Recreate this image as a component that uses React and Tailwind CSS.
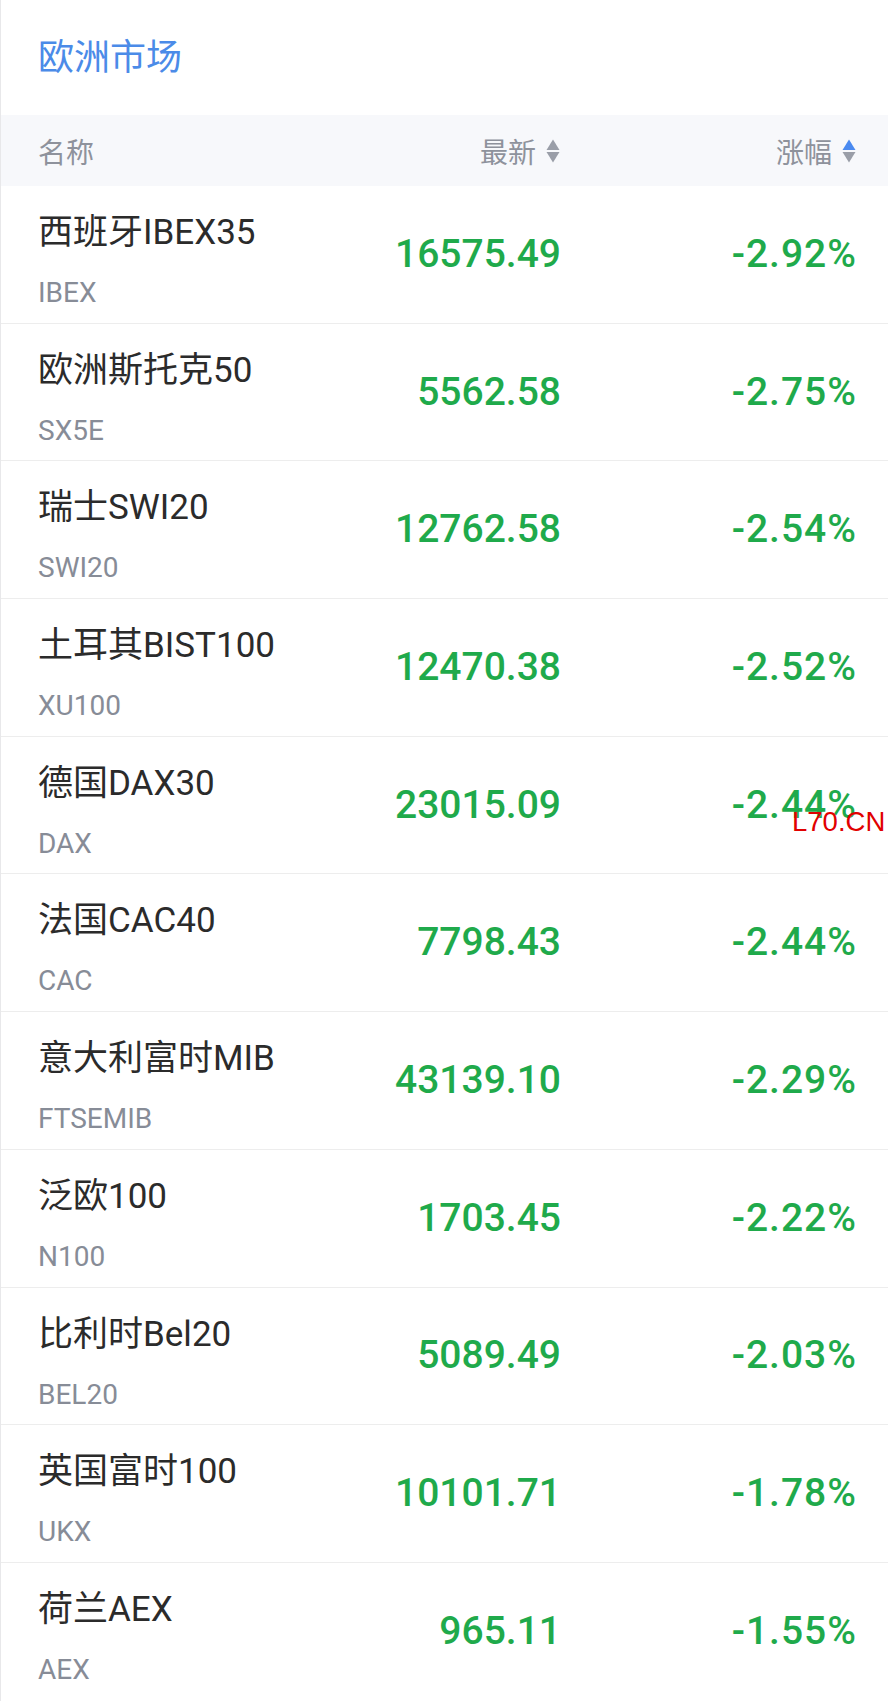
import React from "react";

const rows = [
  { name: "西班牙IBEX35", code: "IBEX", price: "16575.49", pct: "-2.92%" },
  { name: "欧洲斯托克50", code: "SX5E", price: "5562.58", pct: "-2.75%" },
  { name: "瑞士SWI20", code: "SWI20", price: "12762.58", pct: "-2.54%" },
  { name: "土耳其BIST100", code: "XU100", price: "12470.38", pct: "-2.52%" },
  { name: "德国DAX30", code: "DAX", price: "23015.09", pct: "-2.44%" },
  { name: "法国CAC40", code: "CAC", price: "7798.43", pct: "-2.44%" },
  { name: "意大利富时MIB", code: "FTSEMIB", price: "43139.10", pct: "-2.29%" },
  { name: "泛欧100", code: "N100", price: "1703.45", pct: "-2.22%" },
  { name: "比利时Bel20", code: "BEL20", price: "5089.49", pct: "-2.03%" },
  { name: "英国富时100", code: "UKX", price: "10101.71", pct: "-1.78%" },
  { name: "荷兰AEX", code: "AEX", price: "965.11", pct: "-1.55%" },
];

// up/down sort arrows, top one blue when active
const SortIcon = ({ active }) => (
  <svg width="14" height="26" viewBox="0 0 14 26" className="ml-[10px]">
    <polygon points="7,1.5 13.5,12 0.5,12" fill={active ? "#4a8af0" : "#9a9ea8"} />
    <polygon points="0.5,14 13.5,14 7,24.5" fill="#9a9ea8" />
  </svg>
);

const App = () => {
  return (
    <div className="relative w-[888px] h-[1701px] overflow-hidden bg-white border-l border-[#e8e8ea] font-['Roboto','Noto_Sans_CJK_SC',sans-serif]">
      <div className="h-[115px] flex items-center pl-[37px] pb-[8px]">
        <h1 className="text-[36px] leading-none text-[#4b8be8] font-['Noto_Sans_CJK_SC',sans-serif] font-normal">
          欧洲市场
        </h1>
      </div>

      <div className="h-[71px] bg-[#f7f8fb] flex items-center pl-[37px] pr-[32px] text-[28px] text-[#8e929c] font-['Noto_Sans_CJK_SC',sans-serif]">
        <div className="flex-1">名称</div>
        <div className="w-[220px] flex items-center justify-end">
          最新
          <SortIcon />
        </div>
        <div className="w-[296px] flex items-center justify-end">
          涨幅
          <SortIcon active />
        </div>
      </div>

      {rows.map((r, i) => (
        <div
          key={r.code}
          className={
            "h-[137.7px] flex pl-[37px] pr-[32px] " +
            (i < rows.length - 1 ? "border-b border-[#ededed]" : "")
          }
        >
          <div className="flex-1 flex flex-col pt-[27px]">
            <div className="text-[35px] leading-[40px] text-[#2b2b2b]">{r.name}</div>
            <div className="mt-[24px] text-[28px] leading-[32px] text-[#878c97]">{r.code}</div>
          </div>
          <div className="w-[220px] self-center text-right text-[39px] leading-none font-medium text-[#1faa4b]">
            {r.price}
          </div>
          <div className="w-[296px] self-center text-right text-[39px] leading-none font-medium tracking-[1px] -mr-[1px] text-[#1faa4b]">
            {r.pct}
          </div>
        </div>
      ))}

      <div className="absolute left-[791px] top-[808px] text-[27.5px] leading-none text-[#e10000] font-['Liberation_Sans',Arial,sans-serif]">
        L70.CN
      </div>
    </div>
  );
};

export default App;
